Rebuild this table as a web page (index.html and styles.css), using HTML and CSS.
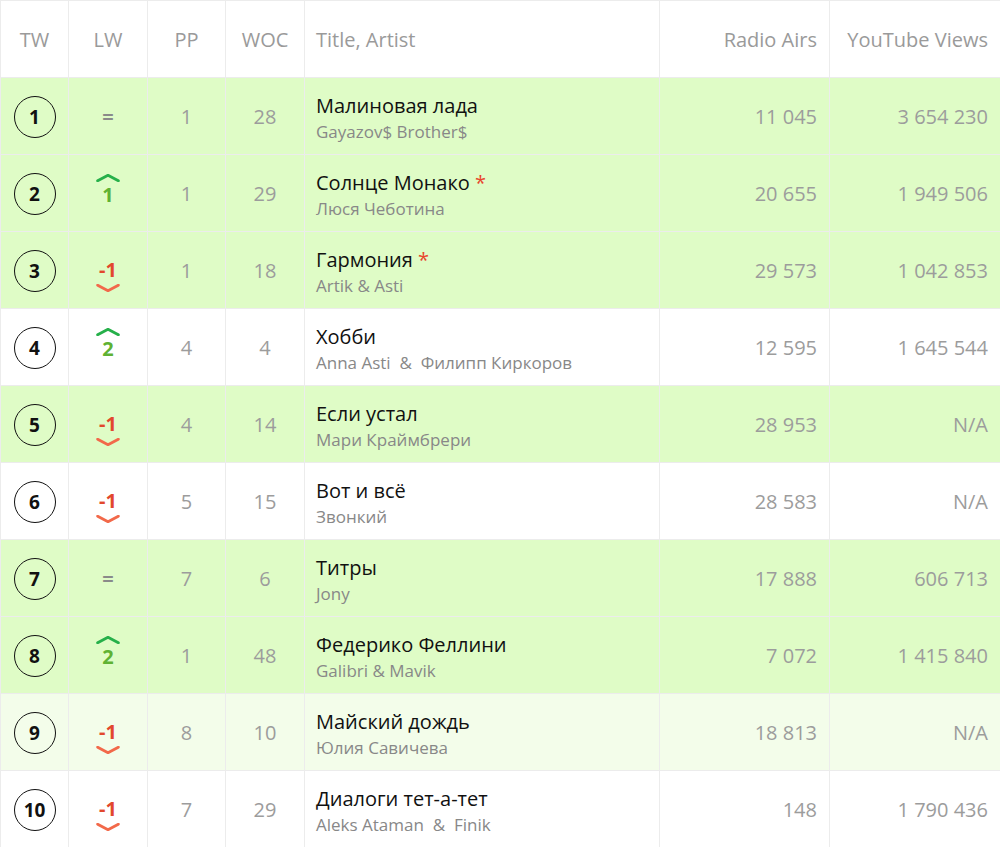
FILE: index.html
```html
<!DOCTYPE html>
<html lang="ru">
<head>
<meta charset="utf-8">
<title>Chart</title>
<link rel="stylesheet" href="styles.css">
</head>
<body>
<table class="chart">
  <colgroup>
    <col class="c-tw"><col class="c-lw"><col class="c-pp"><col class="c-woc"><col class="c-title"><col class="c-radio"><col class="c-yt">
  </colgroup>
  <thead>
    <tr>
      <th class="center">TW</th>
      <th class="center">LW</th>
      <th class="center">PP</th>
      <th class="center">WOC</th>
      <th class="left">Title, Artist</th>
      <th class="right">Radio Airs</th>
      <th class="right">YouTube Views</th>
    </tr>
  </thead>
  <tbody>
    <tr class="hl">
      <td class="center"><span class="pos">1</span></td>
      <td class="center"><span class="same">=</span></td>
      <td class="center num">1</td>
      <td class="center num">28</td>
      <td class="song"><div class="title">Малиновая лада</div><div class="artist">Gayazov$ Brother$</div></td>
      <td class="right num">11 045</td>
      <td class="right num">3 654 230</td>
    </tr>
    <tr class="hl">
      <td class="center"><span class="pos">2</span></td>
      <td class="center"><span class="move up"><svg class="chev" viewBox="0 0 22 8"><path d="M1.5 7 L11 2 L20.5 7"/></svg>1</span></td>
      <td class="center num">1</td>
      <td class="center num">29</td>
      <td class="song"><div class="title">Солнце Монако <span class="star">*</span></div><div class="artist">Люся Чеботина</div></td>
      <td class="right num">20 655</td>
      <td class="right num">1 949 506</td>
    </tr>
    <tr class="hl">
      <td class="center"><span class="pos">3</span></td>
      <td class="center"><span class="move down">-1<svg class="chev" viewBox="0 0 22 8"><path d="M1.5 1 L11 6 L20.5 1"/></svg></span></td>
      <td class="center num">1</td>
      <td class="center num">18</td>
      <td class="song"><div class="title">Гармония <span class="star">*</span></div><div class="artist">Artik &amp; Asti</div></td>
      <td class="right num">29 573</td>
      <td class="right num">1 042 853</td>
    </tr>
    <tr>
      <td class="center"><span class="pos">4</span></td>
      <td class="center"><span class="move up"><svg class="chev" viewBox="0 0 22 8"><path d="M1.5 7 L11 2 L20.5 7"/></svg>2</span></td>
      <td class="center num">4</td>
      <td class="center num">4</td>
      <td class="song"><div class="title">Хобби</div><div class="artist">Anna Asti &nbsp;&amp;&nbsp; Филипп Киркоров</div></td>
      <td class="right num">12 595</td>
      <td class="right num">1 645 544</td>
    </tr>
    <tr class="hl">
      <td class="center"><span class="pos">5</span></td>
      <td class="center"><span class="move down">-1<svg class="chev" viewBox="0 0 22 8"><path d="M1.5 1 L11 6 L20.5 1"/></svg></span></td>
      <td class="center num">4</td>
      <td class="center num">14</td>
      <td class="song"><div class="title">Если устал</div><div class="artist">Мари Краймбрери</div></td>
      <td class="right num">28 953</td>
      <td class="right num">N/A</td>
    </tr>
    <tr>
      <td class="center"><span class="pos">6</span></td>
      <td class="center"><span class="move down">-1<svg class="chev" viewBox="0 0 22 8"><path d="M1.5 1 L11 6 L20.5 1"/></svg></span></td>
      <td class="center num">5</td>
      <td class="center num">15</td>
      <td class="song"><div class="title">Вот и всё</div><div class="artist">Звонкий</div></td>
      <td class="right num">28 583</td>
      <td class="right num">N/A</td>
    </tr>
    <tr class="hl">
      <td class="center"><span class="pos">7</span></td>
      <td class="center"><span class="same">=</span></td>
      <td class="center num">7</td>
      <td class="center num">6</td>
      <td class="song"><div class="title">Титры</div><div class="artist">Jony</div></td>
      <td class="right num">17 888</td>
      <td class="right num">606 713</td>
    </tr>
    <tr class="hl">
      <td class="center"><span class="pos">8</span></td>
      <td class="center"><span class="move up"><svg class="chev" viewBox="0 0 22 8"><path d="M1.5 7 L11 2 L20.5 7"/></svg>2</span></td>
      <td class="center num">1</td>
      <td class="center num">48</td>
      <td class="song"><div class="title">Федерико Феллини</div><div class="artist">Galibri &amp; Mavik</div></td>
      <td class="right num">7 072</td>
      <td class="right num">1 415 840</td>
    </tr>
    <tr class="soft">
      <td class="center"><span class="pos">9</span></td>
      <td class="center"><span class="move down">-1<svg class="chev" viewBox="0 0 22 8"><path d="M1.5 1 L11 6 L20.5 1"/></svg></span></td>
      <td class="center num">8</td>
      <td class="center num">10</td>
      <td class="song"><div class="title">Майский дождь</div><div class="artist">Юлия Савичева</div></td>
      <td class="right num">18 813</td>
      <td class="right num">N/A</td>
    </tr>
    <tr>
      <td class="center"><span class="pos">10</span></td>
      <td class="center"><span class="move down">-1<svg class="chev" viewBox="0 0 22 8"><path d="M1.5 1 L11 6 L20.5 1"/></svg></span></td>
      <td class="center num">7</td>
      <td class="center num">29</td>
      <td class="song"><div class="title">Диалоги тет-а-тет</div><div class="artist">Aleks Ataman &nbsp;&amp;&nbsp; Finik</div></td>
      <td class="right num">148</td>
      <td class="right num">1 790 436</td>
    </tr>
  </tbody>
</table>
</body>
</html>
```
FILE: styles.css
```css
html, body {
  margin: 0;
  padding: 0;
  background: #ffffff;
}
body {
  font-family: "Open Sans", "Noto Sans", sans-serif;
  color: #111;
}
.chart {
  width: 1000px;
  border-collapse: collapse;
  table-layout: fixed;
}
.c-tw { width: 68px; }
.c-lw { width: 79px; }
.c-pp { width: 78px; }
.c-woc { width: 79px; }
.c-title { width: 355px; }
.c-radio { width: 170px; }
.c-yt { width: 171px; }

.chart th, .chart td {
  border: 1px solid #ececec;
  padding: 0 12px;
  vertical-align: middle;
}
.chart th {
  height: 76px;
  font-weight: 400;
  font-size: 20px;
  color: #9a9a9a;
}
.chart td {
  height: 76px;
}
.chart th.left, .chart td.song { padding-left: 11px; }
.chart th.right, .chart td.right { padding-right: 12px; }
.center { text-align: center; }
.left { text-align: left; }
.right { text-align: right; }

.hl td { background: #dffcc6; }
.soft td { background: #f3fdea; }

.num {
  font-size: 20px;
  color: #9c9c9c;
}

.pos {
  display: inline-flex;
  align-items: center;
  justify-content: center;
  box-sizing: border-box;
  width: 42px;
  height: 42px;
  border: 1.5px solid #111;
  border-radius: 50%;
  font-weight: 700;
  font-size: 19px;
  color: #111;
  margin-top: 2px;
}

.same {
  font-weight: 700;
  font-size: 20px;
  color: #8a8a8a;
}

.move {
  position: relative;
  display: inline-block;
  font-weight: 700;
  font-size: 20px;
  line-height: 22px;
}
.move .chev {
  position: absolute;
  left: 50%;
  width: 24px;
  height: 9px;
  margin-left: -12px;
  fill: none;
  stroke-width: 2.6;
  stroke-linecap: round;
  stroke-linejoin: round;
}
.move.up { color: #5fb233; top: 2px; }
.move.up .chev { stroke: #26b04a; top: -11px; }
.move.down { color: #e2482d; }
.move.down .chev { stroke: #f2694a; bottom: -12px; }

.song {
  text-align: left;
}
.title {
  font-size: 20px;
  color: #111;
  line-height: 26px;
  margin-top: 4px;
}
.artist {
  font-size: 17px;
  color: #888;
  line-height: 24px;
  margin-top: 1px;
}
.star {
  color: #e8452c;
}
```
